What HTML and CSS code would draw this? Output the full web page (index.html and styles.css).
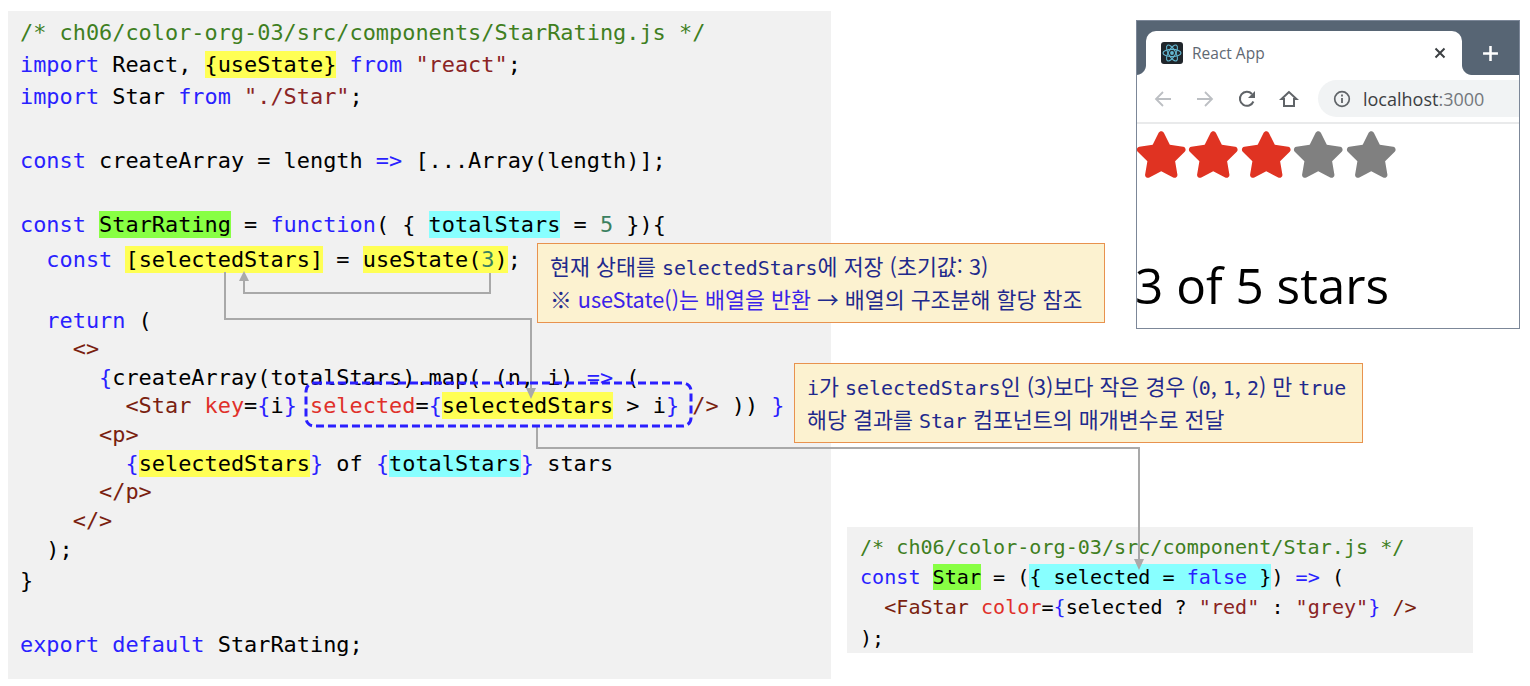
FILE: index.html
```html
<!DOCTYPE html>
<html lang="ko">
<head>
<meta charset="utf-8">
<title>StarRating</title>
<link rel="stylesheet" href="styles.css">
</head>
<body>
<svg class="defs" width="0" height="0" aria-hidden="true">
  <symbol id="fa-star" viewBox="0 0 576 512"><path d="M259.3 17.8L194 150.2 47.9 171.5c-26.2 3.8-36.7 36.1-17.7 54.6l105.7 103-25 145.5c-4.5 26.3 23.2 46 46.4 33.7L288 439.6l130.7 68.7c23.2 12.2 50.9-7.4 46.4-33.7l-25-145.5 105.7-103c19-18.5 8.5-50.8-17.7-54.6L382 150.2 316.7 17.8c-11.7-23.6-45.6-23.9-57.4 0z"/></symbol>
</svg>
<main class="slide">
  <section class="code code-main">
    <div class="ln h32"><span class="c">/* ch06/color-org-03/src/components/StarRating.js */</span></div>
    <div class="ln h32"><span class="k">import</span> React, <span class="hy">{useState}</span> <span class="k">from</span> <span class="s">"react"</span>;</div>
    <div class="ln h32"><span class="k">import</span> Star <span class="k">from</span> <span class="s">"./Star"</span>;</div>
    <div class="ln h32"></div>
    <div class="ln h32"><span class="k">const</span> createArray = length <span class="k">=&gt;</span> [...Array(length)];</div>
    <div class="ln h32"></div>
    <div class="ln h32"><span class="k">const</span> <span class="hg">StarRating</span> = <span class="k">function</span>( { <span class="hc">totalStars</span> = <span class="n">5</span> }){</div>
    <div class="ln h38">  <span class="k">const</span> <span class="hy">[selectedStars]</span> = <span class="hy">useState(<span class="n">3</span>)</span>;</div>
    <div class="ln h27"></div>
    <div class="ln h29-5">  <span class="k">return</span> (</div>
    <div class="ln h29">    <span class="t">&lt;&gt;</span></div>
    <div class="ln h29">      <span class="k">{</span>createArray(totalStars).map( (n, i) <span class="k">=&gt;</span> (</div>
    <div class="ln h29">        <span class="t">&lt;Star</span> <span class="a">key</span>=<span class="k">{</span>i<span class="k">}</span> <span class="a">selected</span>=<span class="k">{</span><span class="hy">selectedStars</span> &gt; i<span class="k">}</span> <span class="t">/&gt;</span> )) <span class="k">}</span></div>
    <div class="ln h29">      <span class="t">&lt;p&gt;</span></div>
    <div class="ln h29">        <span class="k">{</span><span class="hy">selectedStars</span><span class="k">}</span> of <span class="k">{</span><span class="hc">totalStars</span><span class="k">}</span> stars</div>
    <div class="ln h29">      <span class="t">&lt;/p&gt;</span></div>
    <div class="ln h29">    <span class="t">&lt;/&gt;</span></div>
    <div class="ln h29">  );</div>
    <div class="ln h32">}</div>
    <div class="ln h32"></div>
    <div class="ln h32"><span class="k">export</span> <span class="k">default</span> StarRating;</div>
  </section>

  <div class="right">
    <section class="browser">
      <div class="tabstrip">
        <div class="tab">
          <svg class="favicon" viewBox="0 0 22 22" aria-hidden="true">
            <rect width="22" height="22" rx="3" fill="#20262b"/>
            <g fill="none" stroke="#63b6cf" stroke-width="1.1">
              <ellipse cx="11" cy="11" rx="9" ry="3.6"/>
              <ellipse cx="11" cy="11" rx="9" ry="3.6" transform="rotate(60 11 11)"/>
              <ellipse cx="11" cy="11" rx="9" ry="3.6" transform="rotate(120 11 11)"/>
            </g>
            <circle cx="11" cy="11" r="1.9" fill="#63b6cf"/>
          </svg>
          <span class="tab-title">React App</span>
          <svg class="tab-close" viewBox="0 0 12 12" aria-hidden="true"><path d="M1.5 1.5l9 9M10.5 1.5l-9 9" stroke="#3c4043" stroke-width="2" fill="none"/></svg>
        </div>
        <svg class="tab-new" viewBox="0 0 16 16" aria-hidden="true"><path d="M8 1v14M1 8h14" stroke="#fff" stroke-width="2.4" fill="none"/></svg>
      </div>
      <div class="toolbar">
        <svg class="tool" viewBox="0 0 20 20" aria-hidden="true"><path d="M18 10H3M10 3l-7 7 7 7" fill="none" stroke="#bcbfc3" stroke-width="1.8"/></svg>
        <svg class="tool" viewBox="0 0 20 20" aria-hidden="true"><path d="M2 10h15M10 3l7 7-7 7" fill="none" stroke="#bcbfc3" stroke-width="1.8"/></svg>
        <svg class="tool" viewBox="0 0 20 20" aria-hidden="true"><path d="M16.4 12.5A7 7 0 1 1 15 5" fill="none" stroke="#606468" stroke-width="2"/><path d="M18 2v7h-7z" fill="#606468"/></svg>
        <svg class="tool" viewBox="0 0 20 20" aria-hidden="true"><path d="M10 3L2.5 10H5v7h10v-7h2.500z" fill="none" stroke="#606468" stroke-width="2"/></svg>
        <div class="omnibox">
          <svg class="info" viewBox="0 0 18 18" aria-hidden="true"><circle cx="9" cy="9" r="7.300" fill="none" stroke="#606468" stroke-width="1.700"/><path d="M9 8v5M9 4.600v2" stroke="#606468" stroke-width="1.800"/></svg>
          <span class="url">localhost<span class="port">:3000</span></span>
        </div>
      </div>
      <div class="page">
        <div class="stars">
          <svg class="star red" aria-hidden="true"><use href="#fa-star"/></svg>
          <svg class="star red" aria-hidden="true"><use href="#fa-star"/></svg>
          <svg class="star red" aria-hidden="true"><use href="#fa-star"/></svg>
          <svg class="star grey" aria-hidden="true"><use href="#fa-star"/></svg>
          <svg class="star grey" aria-hidden="true"><use href="#fa-star"/></svg>
        </div>
        <p class="rating">3 of 5 stars</p>
      </div>
    </section>

    <section class="code code-star">
      <div class="ln"><span class="c">/* ch06/color-org-03/src/component/Star.js */</span></div>
      <div class="ln"><span class="k">const</span> <span class="hg">Star</span> = (<span class="hc">{ selected = <span class="k">false</span> }</span>) <span class="k">=&gt;</span> (</div>
      <div class="ln">  <span class="t">&lt;FaStar</span> <span class="a">color</span>=<span class="k">{</span>selected ? <span class="s">"red"</span> : <span class="s">"grey"</span><span class="k">}</span> <span class="t">/&gt;</span></div>
      <div class="ln">);</div>
    </section>
  </div>

  <aside class="note note-state">
    <div>현재 상태를 <span class="m">selectedStars</span>에 저장 (초기값: 3)</div>
    <div>※ <span class="blue">useState()는 배열을 반환</span> → 배열의 구조분해 할당 참조</div>
  </aside>
  <aside class="note note-prop">
    <div><span class="m">i</span>가 <span class="m">selectedStars</span>인 (3)보다 작은 경우 (<span class="m">0</span>, <span class="m">1</span>, <span class="m">2</span>) 만 <span class="m">true</span></div>
    <div>해당 결과를 <span class="m">Star</span> 컴포넌트의 매개변수로 전달</div>
  </aside>

  <svg class="overlay" viewBox="0 0 1530 686" aria-hidden="true">
    <g fill="none" stroke="#a9a9a9" stroke-width="2">
      <path d="M490 273V293H244V280"/>
      <path d="M225 272V319H531V390"/>
      <path d="M537 427V448H1139V560"/>
    </g>
    <g fill="#a9a9a9">
      <path d="M244 271l-5 10h10z"/>
      <path d="M531 399l-5-11h10z"/>
      <path d="M1139 570l-5-11h10z"/>
    </g>
    <rect x="306" y="383" width="385" height="43" rx="8" fill="none" stroke="#2a1fff" stroke-width="3" stroke-dasharray="8 4"/>
  </svg>
</main>
</body>
</html>
```
FILE: styles.css
```css
* { box-sizing: border-box; }
html, body { margin: 0; background: #fff; }
.defs { position: absolute; }
.slide {
  position: relative;
  display: flex;
  align-items: flex-start;
  width: 1530px;
  height: 686px;
  padding: 11px 0 0 8px;
  overflow: hidden;
}
.code {
  background: #f1f1f1;
  color: #000;
  font-family: "DejaVu Sans Mono", monospace;
}
.code-main {
  flex: none;
  width: 823px;
  height: 668px;
  padding: 6px 0 0 12px;
  font-size: 21.9px;
}
.ln { white-space: pre; }
.h32 { height: 32px; line-height: 32px; }
.h38 { height: 38px; line-height: 38px; }
.h27 { height: 27px; line-height: 27px; }
.h29-5 { height: 29px; line-height: 29px; }
.h29 { height: 28.7px; line-height: 28.7px; }
.c { color: #3f7f1f; }
.k { color: #2a1fff; }
.s { color: #8a2424; }
.t { color: #7a1f10; }
.a { color: #e0302a; }
.n { color: #3a8060; }
.hy { background: #ffff55; padding: 1px 0; }
.hg { background: #88ff44; padding: 1px 0; }
.hc { background: #88ffff; padding: 1px 0; }

.right {
  flex: none;
  width: 673px;
  margin-left: 16px;
  padding-top: 9px;
}
.browser {
  width: 384px;
  height: 309px;
  margin-left: 289px;
  border: 1px solid #7c8798;
  background: #fff;
  overflow: hidden;
}
.tabstrip {
  display: flex;
  align-items: flex-end;
  height: 54px;
  padding-left: 9px;
  background: #576574;
}
.tab {
  position: relative;
  display: flex;
  align-items: center;
  width: 316px;
  height: 44px;
  padding: 0 15px 0 15px;
  background: #fff;
  border-radius: 10px 10px 0 0;
}
.tab::before, .tab::after {
  content: "";
  position: absolute;
  bottom: 0;
  width: 10px;
  height: 10px;
}
.tab::before { left: -10px; background: radial-gradient(circle at 0 0, #576574 9.500px, #fff 10.500px); }
.tab::after { right: -10px; background: radial-gradient(circle at 100% 0, #576574 9.500px, #fff 10.500px); }
.favicon { width: 22px; height: 22px; flex: none; }
.tab-title {
  flex: 1;
  margin-left: 9px;
  font: 15.5px "Open Sans", sans-serif;
  color: #5f6873;
}
.tab-close { width: 12px; height: 12px; flex: none; margin-right: 1px; }
.tab-new { width: 17px; height: 17px; margin: 0 0 13px 20px; flex: none; }
.toolbar {
  display: flex;
  align-items: center;
  gap: 22px;
  height: 49px;
  padding: 0 0 0 16px;
  border-bottom: 2px solid #e9eaeb;
}
.tool { width: 20px; height: 20px; flex: none; }
.omnibox {
  display: flex;
  align-items: center;
  flex: 1;
  height: 37px;
  margin-left: -3px;
  padding-left: 15px;
  background: #f1f3f4;
  border-radius: 19px 0 0 19px;
}
.info { width: 18px; height: 18px; flex: none; }
.url {
  margin-left: 12px;
  font: 18px "Open Sans", sans-serif;
  color: #3c4043;
}
.port { color: #74787d; }
.page { padding-top: 7px; }
.stars { display: flex; height: 48px; margin-left: -2.500px; }
.star { width: 52.500px; height: 47px; flex: none; }
.red { fill: #e03322; }
.grey { fill: #808080; }
.rating {
  margin: 78px 0 0 -2px;
  font: 400 49.500px/56px "Open Sans", sans-serif;
  color: #000;
  white-space: nowrap;
}
.code-star {
  width: 626px;
  height: 126px;
  margin-top: 198px;
  padding: 5px 0 0 13px;
  font-size: 20.100px;
}
.code-star .ln { height: 30.200px; line-height: 30.200px; }

.note {
  position: absolute;
  z-index: 2;
  display: flex;
  flex-direction: column;
  justify-content: center;
  height: 80px;
  padding: 0 0 2px 12px;
  background: #fcf2d0;
  border: 1px solid #e8924e;
  color: #1f2a8c;
  font: 21.700px/33px "Noto Sans CJK KR", sans-serif;
  white-space: nowrap;
}
.note-state { left: 537px; top: 243px; width: 568px; }
.note-prop { left: 794px; top: 363px; width: 569px; }
.m { font-family: "DejaVu Sans Mono", "Noto Sans CJK KR", monospace; font-size: 19.900px; line-height: 1; }
.blue { color: #3a22e8; }
.overlay {
  position: absolute;
  z-index: 3;
  left: 0;
  top: 0;
  width: 1530px;
  height: 686px;
  pointer-events: none;
}
```
